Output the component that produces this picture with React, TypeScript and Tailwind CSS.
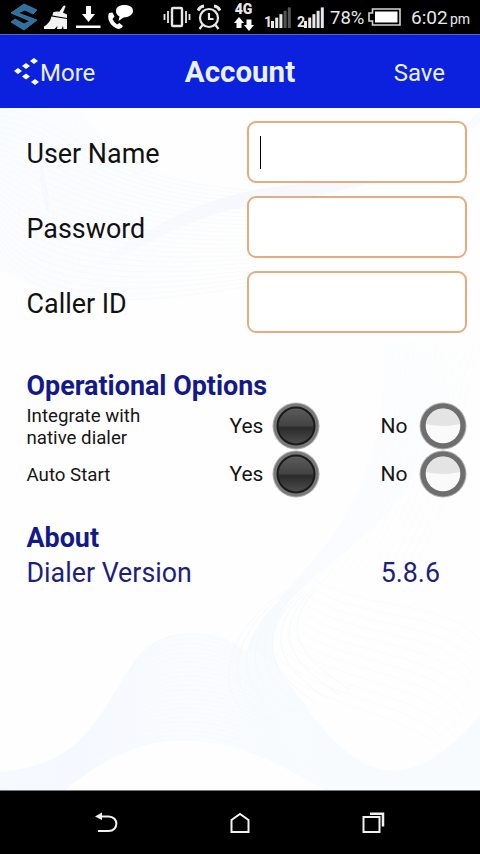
import { useState } from 'react';

// Interpolates between two cubic paths to build a fan of thin lines
function fan(from: number[], to: number[], count: number) {
  return Array.from({ length: count }, (_, i) => {
    const t = i / (count - 1);
    const p = from.map((v, k) => (v + (to[k] - v) * t).toFixed(1));
    return `M${p[0]} ${p[1]}C${p.slice(2).join(' ')}`;
  }).join('');
}

function WaveBackground() {
  return (
    <svg className="pointer-events-none absolute inset-0" width="480" height="682" viewBox="0 108 480 682" fill="none">
      <defs>
        <linearGradient id="ribbon" x1="0" y1="0" x2="1" y2="0">
          <stop offset="0" stopColor="#f6faff" />
          <stop offset="0.16" stopColor="#f5f8ff" />
          <stop offset="0.4" stopColor="#fafcfe" />
          <stop offset="0.7" stopColor="#f7fbfe" />
          <stop offset="1" stopColor="#f8fbfe" />
        </linearGradient>
        <linearGradient id="corner" x1="0" y1="0" x2="1" y2="0.3">
          <stop offset="0" stopColor="#f9fcfe" />
          <stop offset="0.6" stopColor="#fcfdff" />
          <stop offset="1" stopColor="#fefefe" />
        </linearGradient>
        <linearGradient id="band" x1="0" y1="0" x2="1" y2="0">
          <stop offset="0" stopColor="#fbfcfe" />
          <stop offset="0.4" stopColor="#f6f8fd" />
          <stop offset="1" stopColor="#f8fbff" />
        </linearGradient>
        <linearGradient id="side" x1="1" y1="0" x2="0" y2="1">
          <stop offset="0" stopColor="#fefefe" />
          <stop offset="0.6" stopColor="#fafcff" />
          <stop offset="1" stopColor="#f6fafd" />
        </linearGradient>
      </defs>

      {/* Top left mesh */}
      <path d="M0 108H80C100 150 170 185 260 195L250 290C180 310 60 310 0 270Z" fill="url(#corner)" />
      <path d="M80 272C140 238 190 192 300 184S440 150 480 110V122C420 185 320 195 250 206S150 250 80 272Z" fill="url(#band)" />
      <path d="M40 160Q51 190 48 216Q39 190 40 160Z" fill="#f6f8fd" />
      <path d={fan([0, 110, 60, 110, 90, 180, 250, 190], [0, 250, 40, 320, 160, 300, 250, 286], 26)} stroke="#f5f8fa" strokeWidth="0.7" />
      <path d={fan([0, 150, 30, 180, 40, 230, 60, 300], [80, 110, 60, 150, 120, 210, 230, 300], 14)} stroke="#f9fbfc" strokeWidth="0.7" />

      {/* Right hand sheet */}
      <path d="M385 345C392 440 355 510 320 552S240 640 250 655C262 670 275 700 310 710C275 670 258 645 290 600C330 560 375 535 405 490S440 400 480 360V330Z" fill="url(#side)" />

      {/* Bottom ribbon */}
      <path
        d="M0 772C60 765 80 745 105 708S140 634 190 633S235 655 255 650C290 680 320 735 355 758S430 775 480 715V790H325C280 765 240 740 190 740S110 755 65 790H0Z"
        fill="url(#ribbon)"
      />
      <path d={fan([130, 670, 150, 625, 215, 625, 245, 655], [120, 755, 160, 730, 230, 735, 300, 775], 24)} stroke="#f5f9fa" strokeWidth="0.7" />

      <path d={fan([285, 590, 215, 640, 215, 700, 260, 725], [315, 590, 285, 625, 290, 650, 350, 690], 9)} stroke="#f3f8fb" strokeWidth="0.8" />
      <path d={fan([315, 580, 360, 610, 450, 600, 480, 640], [270, 660, 310, 710, 420, 710, 450, 760], 12)} stroke="#f8fafb" strokeWidth="0.9" />
      <path d={fan([385, 345, 390, 450, 350, 520, 300, 580], [480, 350, 450, 420, 470, 480, 400, 590], 14)} stroke="#f9fafc" strokeWidth="0.7" />
    </svg>
  );
}

function SignalBars({ label, level }: { label: string; level: number }) {
  return (
    <div className="flex h-[21px] items-end">
      <span className="w-[7px] text-[14px] leading-[12px] font-bold">{label}</span>
      <svg width="21" height="21" viewBox="0 0 21 21">
        {[0, 1, 2, 3, 4].map((i) => (
          <rect key={i} x={i * 4.2} y={14 - i * 3.4} width="3" height={7 + i * 3.4} fill={i < level ? '#e8e8e8' : '#555555'} />
        ))}
      </svg>
    </div>
  );
}

function StatusBar() {
  return (
    <div className="flex h-[34px] items-center bg-black pl-[10px] text-[#e8e8e8]">
      <svg width="29" height="30" viewBox="0 0 29 30">
        <path d="M14 2 27 8 23 12 15 8 8 11 27 18 14 28 1 20 5 17 14 22 20 19 1 11Z" fill="#2e6f9f" stroke="#3f83b0" strokeWidth="0.8" />
      </svg>
      <svg className="ml-[4px]" width="27" height="25" viewBox="0 0 27 25" fill="#f2f2f2">
        <path d="M15.500 8 20 1.500Q22-.5 22.500 1.500L19.500 9Z" />
        <path d="M10 7.500Q15 4.500 24 9.500V13L9.500 10.500Z" />
        <path d="M8.500 11.500 24 14V24H20.500L20 21 18.500 24H14L14.500 21 11.500 24H1V21.500Q7 18 8.500 11.500Z" />
      </svg>
      <svg className="ml-[6px]" width="25" height="24" viewBox="0 0 25 24" fill="#ffffff">
        <path d="M10 1H15V9H19L12.500 17 6 9H10ZM0 20.500H24.500V23H0Z" />
      </svg>
      <svg className="ml-[6px]" width="27" height="26" viewBox="0 0 27 26" fill="#ffffff">
        <path d="M17.500 1C23 1 26 3.500 26 7S22 13.500 16.500 13.500L11.500 17 12.500 12.500Q9 10.500 9 7C9 3.500 12 1 17.500 1Z" />
        <path d="M2 9 5.500 8.500 7.500 12.500 5.500 15Q7 18.500 10 20.500L12.500 19 16 22Q14.500 25 12 25C5 24-1 16 2 9Z" />
      </svg>

      <svg className="ml-[29px]" width="28" height="22" viewBox="0 0 28 22" fill="none" stroke="#e8e8e8" strokeWidth="2.400">
        <rect x="9" y="2" width="10" height="18" rx="1" />
        <path d="M5 5V17M23 5V17M1.500 8V14M26.500 8V14" strokeWidth="1.800" />
      </svg>
      <svg className="ml-[6px] -mt-px" width="24" height="26" viewBox="0 0 24 26" fill="none" stroke="#e8e8e8" strokeWidth="2.200">
        <circle cx="12" cy="14" r="9" />
        <path d="M12 9V15H16.500M5.500 21 2.500 25M18.500 21 21.500 25" />
        <path d="M1 6.500Q3 2.500 7 2M23 6.500Q21 2.500 17 2" strokeWidth="3" />
      </svg>
      <div className="ml-[12px] flex w-[21px] flex-col items-center">
        <span className="text-[14px] leading-[13px] font-black">4G</span>
        <svg className="mt-[1px]" width="20" height="14" viewBox="0 0 20 14" fill="#ffffff">
          <path d="M5 0 10 6H7.500V11H2.500V6H0ZM15 14 10 8H12.500V2.500H17.500V8H20Z" />
        </svg>
      </div>
      <div className="ml-[10px] flex gap-[5px]">
        <SignalBars label="1" level={3} />
        <SignalBars label="2" level={5} />
      </div>
      <span className="ml-[5px] w-[37px] pt-[2px] text-[18.500px] leading-[20px] whitespace-nowrap">78%</span>
      <svg className="ml-[1px]" width="33" height="18" viewBox="0 0 33 18">
        <path d="M4.500 1H32V17H4.500V13H1V5H4.500Z" fill="none" stroke="#d5d5d5" strokeWidth="1.600" />
        <rect x="7" y="3.500" width="22.500" height="11" fill="#ffffff" />
      </svg>
      <span className="ml-[10px] w-[39px] pt-[2px] text-[19px] leading-[20px] whitespace-nowrap">6:02</span>
      <span className="mt-[4px] text-[14px] leading-[18px]">pm</span>
    </div>
  );
}

function Header() {
  return (
    <header className="grid h-[74px] grid-cols-[1fr_auto_1fr] items-center border-t border-[#5965c9] bg-[#0b21de] px-[14px] text-[24px] text-[#e9f0ff]">
      <button className="flex items-center">
        <svg className="-mt-[2px]" width="26" height="28" viewBox="0 0 26 28" fill="#ffffff">
          <path d="M16 4 20 1 24 4 20 7ZM8 9 12 6 16 9 12 12ZM0 14 4 11 8 14 4 17ZM8 19.500 12 16.500 16 19.500 12 22.500ZM17 25 21 22 25 25 21 28Z" />
        </svg>
        <span className="pt-[2px]">More</span>
      </button>
      <h1 className="pt-[2px] text-[29.500px] font-bold">Account</h1>
      <button className="justify-self-end pt-[2px] pr-[21px]">Save</button>
    </header>
  );
}

function Field({ label, focused }: { label: string; focused?: boolean }) {
  return (
    <div className="flex h-[62px] items-center justify-between">
      <label className="pt-[4px] text-[26.900px] text-[#111111]">{label}</label>
      <div className="flex h-[62px] w-[220px] items-center rounded-[9px] border-2 border-[#e6ab7e] bg-white pl-[11px]">
        {focused && <span className="h-[33px] w-px bg-black" />}
      </div>
    </div>
  );
}

function Radio({ checked, onClick }: { checked: boolean; onClick: () => void }) {
  return (
    <button onClick={onClick} className="size-[48px]">
      {checked ? (
        <svg width="48" height="48" viewBox="0 0 48 48">
          <defs>
            <linearGradient id="knob" x1="0" y1="0" x2="0" y2="1">
              <stop offset="0" stopColor="#5c5c5c" />
              <stop offset="0.48" stopColor="#444444" />
              <stop offset="0.55" stopColor="#2b2b2b" />
              <stop offset="1" stopColor="#4e4e4e" />
            </linearGradient>
          </defs>
          <circle cx="24" cy="24" r="23.500" fill="#b0b0b0" />
          <circle cx="24" cy="24" r="22.500" fill="#787878" />
          <circle cx="24" cy="24" r="18.500" fill="url(#knob)" stroke="#1a1a1a" strokeWidth="2" />
        </svg>
      ) : (
        <svg width="48" height="48" viewBox="0 0 48 48">
          <circle cx="24" cy="24" r="23.500" fill="#b0b0b0" />
          <circle cx="24" cy="24" r="22.500" fill="#6e6e6e" />
          <circle cx="24" cy="24" r="17.300" fill="#fafafa" />
          <path d="M6.800 22A17.300 17.300 0 0 1 41.200 22Q24 26 6.800 22Z" fill="#e4e4e4" />
        </svg>
      )}
    </button>
  );
}

function OptionRow({ label }: { label: React.ReactNode }) {
  const [enabled, setEnabled] = useState(true);

  return (
    <div className="flex h-[48px] items-center text-[21px] text-[#161616]">
      <span className="w-[203px] pt-[2px] text-[18.700px] leading-[22px]">{label}</span>
      <span className="w-[42px] pt-[2px]">Yes</span>
      <Radio checked={enabled} onClick={() => setEnabled(true)} />
      <span className="ml-[61px] w-[38px] pt-[2px]">No</span>
      <Radio checked={!enabled} onClick={() => setEnabled(false)} />
    </div>
  );
}

function NavBar() {
  return (
    <nav className="flex h-[64px] items-center justify-between border-t border-[#777777] bg-black pr-[95px] pl-[95px]">
      <svg width="24" height="24" viewBox="0 0 24 24" fill="none" stroke="#f2f2f2" strokeWidth="2">
        <path d="M6 5.500H13.500C24 5.500 24 20 13.500 20H3" />
        <path d="M0 5.500 7 1.500V9Z" fill="#f2f2f2" stroke="none" />
      </svg>
      <svg className="-ml-[2px]" width="20" height="22" viewBox="0 0 20 22" fill="none" stroke="#f2f2f2" strokeWidth="2">
        <path d="M1.500 20V8L10 2 18.500 8V20Z" />
      </svg>
      <svg width="23" height="22" viewBox="0 0 23 22" fill="none" stroke="#f2f2f2" strokeWidth="2">
        <rect x="1.500" y="5" width="16" height="15" />
        <path d="M8 1.800H21V14.500" strokeWidth="2.500" />
      </svg>
    </nav>
  );
}

export default function App() {
  return (
    <div className="flex h-[854px] w-[480px] flex-col overflow-hidden bg-white font-['Roboto',sans-serif]">
      <StatusBar />
      <Header />

      <main className="relative flex-1 bg-[#fefefe]">
        <WaveBackground />
        <div className="relative pt-[13px] pr-[13px] pl-[26.500px]">
          <div className="flex flex-col gap-[13px]">
            <Field label="User Name" focused />
            <Field label="Password" />
            <Field label="Caller ID" />
          </div>

          <h2 className="mt-[37px] text-[26.900px] leading-[32px] font-bold text-[#14198a]">Operational Options</h2>
          <OptionRow
            label={
              <>
                Integrate with
                <br />
                native dialer
              </>
            }
          />
          <OptionRow label="Auto Start" />

          <h2 className="mt-[24px] text-[26.900px] leading-[32px] font-bold text-[#14198a]">About</h2>
          <div className="mt-px flex justify-between pr-[27px] text-[26.800px] leading-[36px] text-[#1d1f7c]">
            <span>Dialer Version</span>
            <span>5.8.6</span>
          </div>
        </div>
      </main>

      <NavBar />
    </div>
  );
}
